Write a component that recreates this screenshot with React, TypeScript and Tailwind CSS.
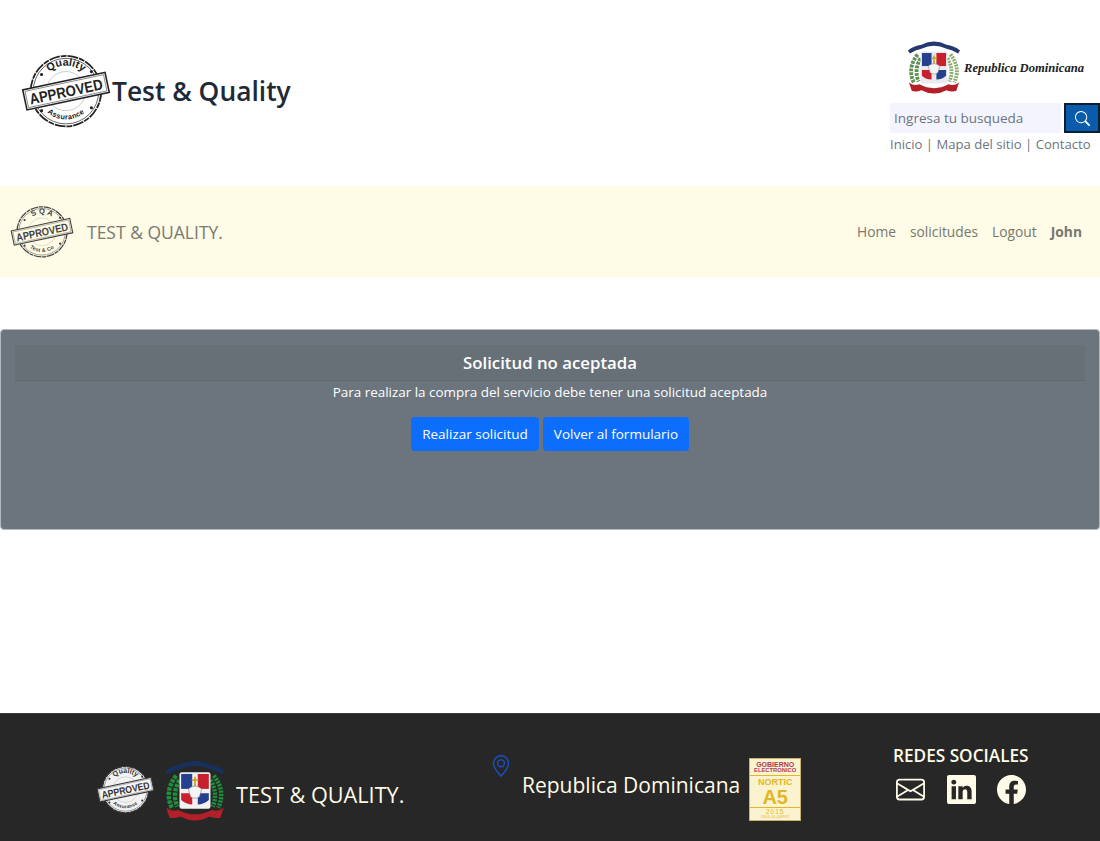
import React from "react";

function Seal({ id, ink, fill, band, top, bottom, size, className, star }: { id: string; ink: string; fill: string; band: string; top: string; bottom: string; size: number; className?: string; star: string }) {
  return (
    <svg viewBox="0 0 92 80" width={size} height={(size * 80) / 92} className={"overflow-visible " + (className ?? "")}>
      <circle cx="46" cy="40" r="36" fill={fill} stroke={ink} strokeWidth="1.8" strokeDasharray="11 1 6 1" />
      <circle cx="46" cy="40" r="33.5" fill="none" stroke={ink} strokeWidth="0.7" />
      <circle cx="46" cy="40" r="20" fill="none" stroke={ink} strokeWidth="0.5" opacity="0.45" />
      <path id={id + "t"} d="M20 40 A 26 26 0 0 1 72 40" fill="none" />
      <path id={id + "b"} d="M17 40 A 29 29 0 0 0 75 40" fill="none" />
      <text fontSize="11" fontWeight="700" fill={ink} fontFamily="Liberation Sans, sans-serif" textAnchor="middle">
        <textPath href={"#" + id + "t"} startOffset="50%">{top}</textPath>
      </text>
      <text fontSize="7.5" fontWeight="700" fill={ink} fontFamily="Liberation Sans, sans-serif" textAnchor="middle" letterSpacing="0.4">
        <textPath href={"#" + id + "b"} startOffset="50%">{bottom}</textPath>
      </text>
      <circle cx="21" cy="23" r="1.6" fill={star} />
      <circle cx="72" cy="20" r="1.6" fill={star} />
      <circle cx="21" cy="60" r="1.6" fill={star} />
      <circle cx="72" cy="57" r="1.6" fill={star} />
      <g transform="rotate(-12 46 40)">
        <rect x="3" y="29.5" width="86" height="21" fill={band} stroke={ink} strokeWidth="1.6" />
        <rect x="5" y="31.5" width="82" height="17" fill="none" stroke={ink} strokeWidth="0.5" />
        <text x="46" y="46" textAnchor="middle" fontSize="15.5" fontWeight="700" fill={ink} fontFamily="Liberation Sans, sans-serif" textLength="76" lengthAdjust="spacingAndGlyphs">APPROVED</text>
      </g>
    </svg>
  );
}

function Arms({ size, dark, className }: { size: number; dark?: boolean; className?: string }) {
  const lau = dark ? "#1f8f3c" : "#5f8f52";
  const pal = dark ? "#1f8f3c" : "#8aae6e";
  return (
    <svg viewBox="3 3 56 56" width={size} height={size} className={className}>
      <path d="M4 14 Q10 9 18 8 Q31 1 44 8 Q52 9 58 14 L56 17 Q50 13 44 12 Q31 6 18 12 Q12 13 6 17Z" fill={dark ? "#17305e" : "#26386f"} />
      <g fill="none" stroke={lau} strokeWidth="4" strokeDasharray="3 1">
        <path d="M14 18 Q3 32 10 47" />
        <path d="M17 22 Q10 34 15 46" />
      </g>
      <g fill="none" stroke={pal} strokeWidth="4" strokeDasharray="2 1">
        <path d="M48 18 Q59 32 52 47" />
        <path d="M45 22 Q52 34 47 46" />
      </g>
      <rect x="17" y="15" width="28" height="33" rx="2" fill={dark ? "#f2f2f2" : "#e9e9ee"} />
      <path d="M18.5 16.5H28.5V30H18.5Z" fill="#24408f" />
      <path d="M33.5 16.5H43.5V30H33.5Z" fill="#c8202f" />
      <path d="M18.5 34H28.5V44Q23 44 18.5 40Z" fill="#c8202f" />
      <path d="M33.5 34H43.5V40Q39 44 33.5 44Z" fill="#24408f" />
      <path d="M31 19v9M28 22h6" stroke="#c9a227" strokeWidth="1.6" />
      <path d="M25 30 Q31 25 37 30 L35 37 Q31 40 27 37Z" fill="#f5f5f5" stroke="#777" strokeWidth="0.5" />
      <path d="M5 47 Q10 51 16 49 Q31 57 46 49 Q52 51 57 47 L54 56 Q48 57 44 55 Q31 62 18 55 Q14 57 8 56Z" fill="#b3202a" />
    </svg>
  );
}

function BI({ d, size, className }: { d: string[]; size: number; className?: string }) {
  return (
    <svg viewBox="0 0 16 16" width={size} height={size} fill="currentColor" className={className}>
      {d.map((p) => (
        <path key={p} d={p} />
      ))}
    </svg>
  );
}

const search = ["M11.742 10.344a6.5 6.5 0 1 0-1.397 1.398h-.001c.03.04.062.078.098.115l3.85 3.85a1 1 0 0 0 1.415-1.414l-3.85-3.85a1.007 1.007 0 0 0-.115-.1zM12 6.5a5.5 5.5 0 1 1-11 0 5.5 5.5 0 0 1 11 0z"];
const envelope = ["M0 4a2 2 0 0 1 2-2h12a2 2 0 0 1 2 2v8a2 2 0 0 1-2 2H2a2 2 0 0 1-2-2V4Zm2-1a1 1 0 0 0-1 1v.217l7 4.2 7-4.2V4a1 1 0 0 0-1-1H2Zm13 2.383-4.708 2.825L15 11.105V5.383Zm-.034 6.876-5.64-3.471L8 9.583l-1.326-.795-5.64 3.47A1 1 0 0 0 2 13h12a1 1 0 0 0 .966-.741ZM1 11.105l4.708-2.897L1 5.383v5.722Z"];
const linkedin = ["M0 1.146C0 .513.526 0 1.175 0h13.65C15.474 0 16 .513 16 1.146v13.708c0 .633-.526 1.146-1.175 1.146H1.175C.526 16 0 15.487 0 14.854V1.146zm4.943 12.248V6.169H2.542v7.225h2.401zm-1.2-8.212c.837 0 1.358-.554 1.358-1.248-.015-.709-.52-1.248-1.342-1.248-.822 0-1.359.54-1.359 1.248 0 .694.521 1.248 1.327 1.248h.016zm4.908 8.212V9.359c0-.216.016-.432.08-.586.173-.431.568-.878 1.232-.878.869 0 1.216.662 1.216 1.634v3.865h2.401V9.25c0-2.22-1.184-3.252-2.764-3.252-1.274 0-1.845.7-2.165 1.193v.025h-.016a5.54 5.54 0 0 1 .016-.025V6.169h-2.4c.03.678 0 7.225 0 7.225h2.4z"];
const facebook = ["M16 8.049c0-4.446-3.582-8.05-8-8.05C3.58 0-.002 3.603-.002 8.05c0 4.017 2.926 7.347 6.75 7.951v-5.625h-2.03V8.05H6.75V6.275c0-2.017 1.195-3.131 3.022-3.131.876 0 1.791.157 1.791.157v1.98h-1.009c-.993 0-1.303.621-1.303 1.258v1.51h2.218l-.354 2.326H9.25V16c3.824-.604 6.75-3.934 6.75-7.951z"];
const geo = ["M12.166 8.94c-.524 1.062-1.234 2.12-1.96 3.07A31.493 31.493 0 0 1 8 14.58a31.481 31.481 0 0 1-2.206-2.57c-.726-.95-1.436-2.008-1.96-3.07C3.304 7.867 3 6.862 3 6a5 5 0 0 1 10 0c0 .862-.305 1.867-.834 2.94zM8 16s6-5.686 6-10A6 6 0 1 0 2 6c0 4.314 6 10 6 10z", "M8 8a2 2 0 1 1 0-4 2 2 0 0 1 0 4zm0 1a3 3 0 1 0 0-6 3 3 0 0 0 0 6z"];

export default function App() {
  return (
    <div className="w-[1100px] h-[841px] flex flex-col overflow-hidden bg-white font-['Open_Sans','Noto_Sans',sans-serif] text-[#212529]">
      <header className="h-[186px] flex justify-between">
        <div className="flex items-center pl-[21px] pb-[3px]">
          <Seal id="a" ink="#222" fill="#fff" band="#fff" star="#222" top="Quality" bottom="Assurance" size={90} />
          <h1 className="text-[26.4px] font-semibold ml-[1px] text-[#212936]">Test &amp; Quality</h1>
        </div>
        <div className="w-[210px] flex flex-col pt-[38px]">
          <div className="flex items-center pl-[17px] h-[57px]">
            <Arms size={54} />
            <span className="font-['Liberation_Serif',serif] italic text-[12.6px] font-bold text-[#222] ml-[3px] mt-[4px] whitespace-nowrap">Republica Dominicana</span>
          </div>
          <div className="flex mt-[8px] h-[30px]">
            <div className="w-[171px] bg-[#f3f4fd] flex items-center pl-[4px] text-[13.5px] text-[#6c757d]">Ingresa tu busqueda</div>
            <div className="ml-[3px] w-[36px] bg-[#0a5bab] border-2 border-[#0b1f33] flex items-center justify-center text-white">
              <BI d={search} size={15} />
            </div>
          </div>
          <div className="text-[13.1px] text-[#6c757d] mt-[1px] leading-[21px] whitespace-nowrap">Inicio | Mapa del sitio | Contacto</div>
        </div>
      </header>

      <nav className="h-[91px] bg-[#fefbe6] flex items-center justify-between pl-[10px] pr-[18px] pt-[1px]">
        <div className="flex items-center">
          <Seal id="b" ink="#444" fill="#fefbe6" band="#fefbe6" star="#444" top="S Q A" bottom="Test & Co" size={64} />
          <span className="ml-[13px] text-[17.5px] text-[#7a7a72]">TEST &amp; QUALITY.</span>
        </div>
        <div className="flex gap-[14px] text-[13.8px] text-[#77776f]">
          <span>Home</span>
          <span>solicitudes</span>
          <span>Logout</span>
          <span className="font-bold">John</span>
        </div>
      </nav>

      <main className="flex-1 pt-[52px]">
        <section className="h-[201px] bg-[#6c757d] border border-[#b5bac0] rounded-[4px] px-[14px] pt-[15px] text-white text-center">
          <div className="h-[36px] bg-[#676f77] border-b border-[#5f666e] flex items-center justify-center text-[16.8px] font-semibold">Solicitud no aceptada</div>
          <p className="text-[13.45px] leading-[22px]">Para realizar la compra del servicio debe tener una solicitud aceptada</p>
          <div className="flex justify-center gap-[4px] mt-[14px] text-[13.5px]">
            <button className="h-[34px] w-[128px] bg-[#0d6efd] rounded-[4px]">Realizar solicitud</button>
            <button className="h-[34px] w-[146px] bg-[#0d6efd] rounded-[4px]">Volver al formulario</button>
          </div>
        </section>
      </main>

      <footer className="h-[128px] bg-[#272727] border-t border-[#3a3a3a] flex text-[#fffbe8]">
        <div className="w-[450px] flex items-center pl-[96px] pt-[24px]">
          <Seal id="c" ink="#333" fill="#f2f2f2" band="#f5f5f5" star="#333" top="Quality" bottom="Assurance" size={59} />
          <Arms size={62} dark className="ml-[9px]" />
          <span className="ml-[10px] text-[21.7px] pt-[11px] whitespace-nowrap">TEST &amp; QUALITY.</span>
        </div>
        <div className="w-[380px] flex items-center pl-[42px] pt-[24px]">
          <BI d={geo} size={22} className="text-[#1d4fc4] self-start mt-[17px] ml-[-2px]" />
          <span className="ml-[10px] text-[21px] mt-[-7px] whitespace-nowrap">Republica Dominicana</span>
          <div className="ml-[9px] w-[52px] h-[63px] bg-[#fbf3cf] border border-[#c9b36a] flex flex-col items-center font-['Liberation_Sans',sans-serif] text-[#e0b726] font-bold leading-none">
            <span className="text-[7px] text-[#b03a5a] mt-[2px]">GOBIERNO</span>
            <span className="text-[5.8px] text-[#b03a5a] border-b border-[#e0b726] w-full text-center pb-[1px]">ELECTRONICO</span>
            <span className="text-[9px] mt-[2px]">NORTIC</span>
            <span className="text-[20px] border-b border-[#e0b726] w-full text-center">A5</span>
            <span className="text-[6.5px] font-normal mt-[1px] tracking-[1px]">2015</span>
            <span className="text-[4px] font-normal">1301-01-40IP07</span>
          </div>
        </div>
        <div className="flex-1 flex flex-col pt-[31px] pl-[63px]">
          <span className="text-[17.2px] font-semibold leading-[22px] whitespace-nowrap">REDES SOCIALES</span>
          <div className="flex items-center gap-[21.5px] mt-[8px] pl-[3px]">
            <BI d={envelope} size={29} />
            <BI d={linkedin} size={29} />
            <BI d={facebook} size={29} />
          </div>
        </div>
      </footer>
    </div>
  );
}
